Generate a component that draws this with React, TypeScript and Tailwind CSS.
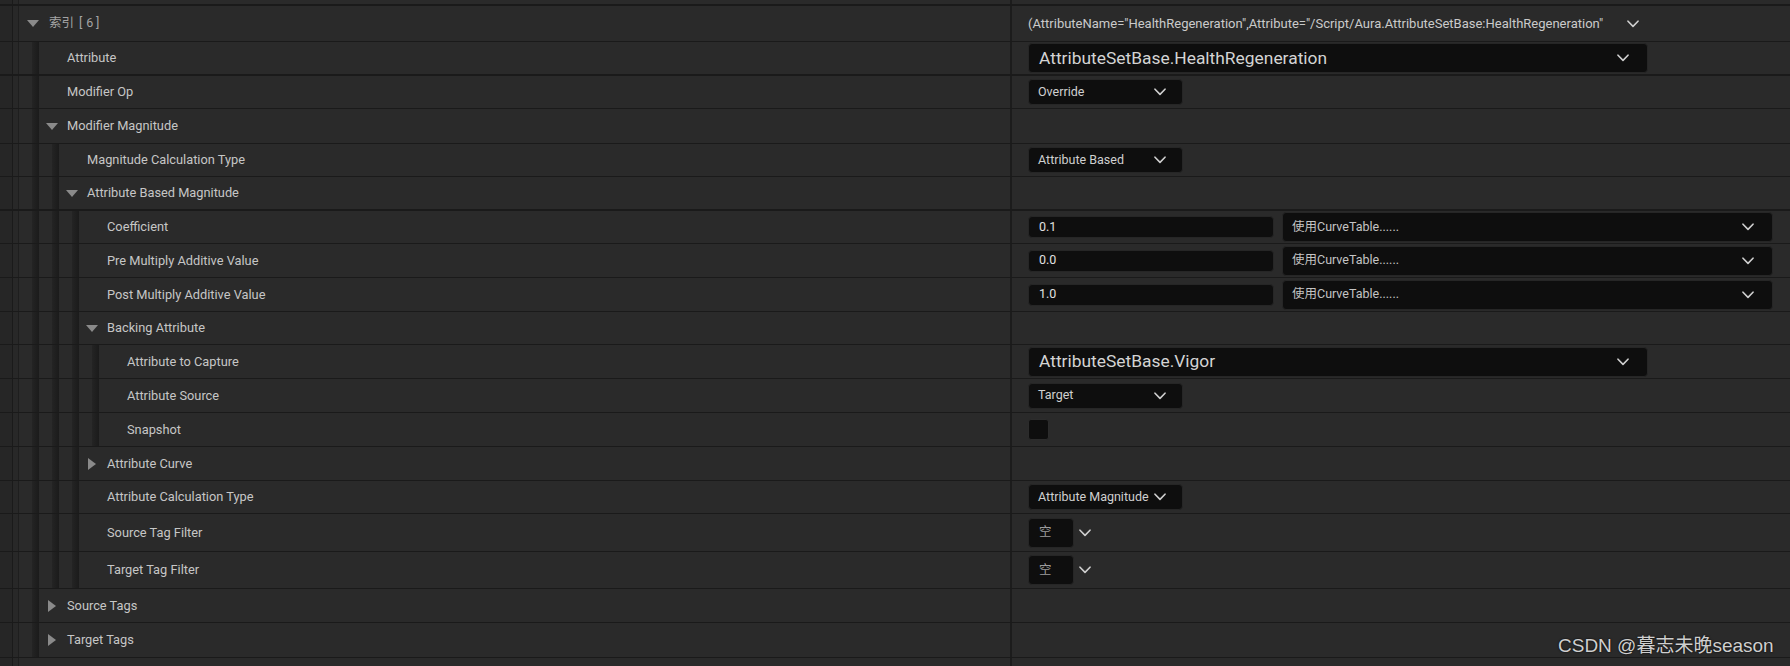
import React from 'react';

const FONT = "font-['Roboto','Noto_Sans_CJK_SC',sans-serif]";

const Chevron = () => (
  <svg width="12" height="8" viewBox="0 0 12 8" className="shrink-0 text-[#cfcfcf]">
    <path d="M1 1.2 L6 6.4 L11 1.2" fill="none" stroke="currentColor" strokeWidth="1.6" strokeLinecap="round" strokeLinejoin="round" />
  </svg>
);

const DownTri = () => (
  <svg width="12" height="7" viewBox="0 0 12 7" className="shrink-0">
    <polygon points="0,0 12,0 6,7" fill="#8a8a8a" />
  </svg>
);

const RightTri = () => (
  <svg width="8" height="12" viewBox="0 0 8 12" className="shrink-0">
    <polygon points="0,0 8,6 0,12" fill="#8a8a8a" />
  </svg>
);

const BigCombo = ({ text }: { text: string }) => (
  <div className="flex h-[30px] w-[620px] items-center justify-between rounded-[4px] border border-[#262626] bg-[#0e0e0e] pl-[10px] pr-[18px]">
    <span className="text-[17.4px] text-[#d4d4d4]">{text}</span>
    <Chevron />
  </div>
);

const SmallCombo = ({ text }: { text: string }) => (
  <div className="flex h-[26px] w-[155px] items-center justify-between rounded-[4px] border border-[#262626] bg-[#0e0e0e] pl-[9px] pr-[16px]">
    <span className="whitespace-nowrap text-[12.5px] text-[#d0d0d0]">{text}</span>
    <Chevron />
  </div>
);

const NumCurve = ({ value }: { value: string }) => (
  <div className="flex items-center gap-[8px]">
    <div className="flex h-[22px] w-[246px] items-center rounded-[4px] border border-[#262626] bg-[#0e0e0e] pl-[10px]">
      <span className="text-[12.5px] text-[#e0e0e0]">{value}</span>
    </div>
    <div className="flex h-[30px] w-[491px] items-center justify-between rounded-[4px] border border-[#262626] bg-[#0e0e0e] pl-[9px] pr-[18px]">
      <span className="text-[12.5px] text-[#c4c4c4]">使用CurveTable......</span>
      <Chevron />
    </div>
  </div>
);

const Checkbox = () => (
  <div className="h-[21px] w-[21px] rounded-[3px] border border-[#2c2c2c] bg-[#0e0e0e]" />
);

const TagFilter = () => (
  <div className="flex items-center gap-[5px]">
    <div className="flex h-[30px] w-[46px] items-center rounded-[4px] border border-[#262626] bg-[#0e0e0e] pl-[10px]">
      <span className="text-[12.5px] text-[#9c9c9c]">空</span>
    </div>
    <Chevron />
  </div>
);

const HeaderValue = () => (
  <div className="flex w-[621px] items-center justify-between pr-[10px]">
    <span className="whitespace-nowrap text-[13px] text-[#cacaca]">
      (AttributeName="HealthRegeneration",Attribute="/Script/Aura.AttributeSetBase:HealthRegeneration"
    </span>
    <Chevron />
  </div>
);

const HeaderLabel = () => (
  <span className="flex items-center whitespace-nowrap pl-[2px] text-[12.5px] text-[#a4a4a4]">
    <span>索引</span>
    <span className="ml-[5px]">[</span>
    <span className="ml-[4px]">6</span>
    <span className="ml-[2.5px]">]</span>
  </span>
);

type Row = {
  label: string;
  depth: number;
  hc: string;
  thick?: boolean;
  arrow?: 'down' | 'right';
  header?: boolean;
  value?: React.ReactNode;
};

const rows: Row[] = [
  { label: '索引 [ 6 ]', depth: 0, hc: 'h-[36px]', arrow: 'down', header: true, value: <HeaderValue /> },
  { label: 'Attribute', depth: 1, hc: 'h-[34px]', thick: true, value: <BigCombo text="AttributeSetBase.HealthRegeneration" /> },
  { label: 'Modifier Op', depth: 1, hc: 'h-[33px]', value: <SmallCombo text="Override" /> },
  { label: 'Modifier Magnitude', depth: 1, hc: 'h-[35px]', arrow: 'down' },
  { label: 'Magnitude Calculation Type', depth: 2, hc: 'h-[33px]', value: <SmallCombo text="Attribute Based" /> },
  { label: 'Attribute Based Magnitude', depth: 2, hc: 'h-[34px]', thick: true, arrow: 'down' },
  { label: 'Coefficient', depth: 3, hc: 'h-[33px]', value: <NumCurve value="0.1" /> },
  { label: 'Pre Multiply Additive Value', depth: 3, hc: 'h-[34px]', value: <NumCurve value="0.0" /> },
  { label: 'Post Multiply Additive Value', depth: 3, hc: 'h-[34px]', value: <NumCurve value="1.0" /> },
  { label: 'Backing Attribute', depth: 3, hc: 'h-[33px]', arrow: 'down' },
  { label: 'Attribute to Capture', depth: 4, hc: 'h-[34px]', value: <BigCombo text="AttributeSetBase.Vigor" /> },
  { label: 'Attribute Source', depth: 4, hc: 'h-[34px]', value: <SmallCombo text="Target" /> },
  { label: 'Snapshot', depth: 4, hc: 'h-[34px]', value: <Checkbox /> },
  { label: 'Attribute Curve', depth: 3, hc: 'h-[34px]', arrow: 'right' },
  { label: 'Attribute Calculation Type', depth: 3, hc: 'h-[33px]', value: <SmallCombo text="Attribute Magnitude" /> },
  { label: 'Source Tag Filter', depth: 3, hc: 'h-[38px]', value: <TagFilter /> },
  { label: 'Target Tag Filter', depth: 3, hc: 'h-[37px]', value: <TagFilter /> },
  { label: 'Source Tags', depth: 1, hc: 'h-[34px]', arrow: 'right' },
  { label: 'Target Tags', depth: 1, hc: 'h-[35px]', arrow: 'right' },
];

const Prefix = () => (
  <div className="flex w-[19px] shrink-0">
    <div className="w-[12px] bg-[#262626]" />
    <div className="w-[1px] bg-[#1a1a1a]" />
    <div className="w-[5px] bg-[#282828]" />
    <div className="w-[1px] bg-[#1e1e1e]" />
  </div>
);

const Indent = () => (
  <div className="flex w-[20px] shrink-0">
    <div className="w-[13px] bg-[#2a2a2a]" />
    <div className="w-[7px] bg-linear-to-r from-[#242424] to-[#1b1b1b]" />
  </div>
);

const RowView = ({ r }: { r: Row }) => {
  const indents = Array.from({ length: r.depth });
  return (
    <div className={`flex ${r.hc} ${r.thick ? 'border-b-2' : 'border-b'} border-[#1a1a1a] bg-[#2a2a2a]`}>
      <div className="flex w-[1010px] shrink-0">
        <Prefix />
        {indents.map((_, i) => (
          <Indent key={i} />
        ))}
        <div className="flex flex-1 items-center">
          <div className={`flex w-[28px] shrink-0 items-center ${r.arrow === 'right' ? 'pl-[9px]' : r.header ? 'pl-[8px]' : 'pl-[7px]'}`}>
            {r.arrow === 'down' && <DownTri />}
            {r.arrow === 'right' && <RightTri />}
          </div>
          {r.header ? (
            <HeaderLabel />
          ) : (
            <span className="whitespace-nowrap text-[12.8px] text-[#c6c6c6]">{r.label}</span>
          )}
        </div>
      </div>
      <div className="w-[2px] shrink-0 bg-[#1c1c1c]" />
      <div className="flex flex-1 items-center pl-[16px]">{r.value}</div>
    </div>
  );
};

export default function App() {
  return (
    <div className={`relative h-[666px] w-[1790px] overflow-hidden bg-[#2a2a2a] ${FONT}`}>
      <div className="flex h-[6px] border-b-2 border-[#1a1a1a] bg-[#2a2a2a]">
        <div className="flex w-[1010px] shrink-0">
          <Prefix />
        </div>
        <div className="w-[2px] shrink-0 bg-[#1c1c1c]" />
      </div>
      {rows.map((r, i) => (
        <RowView key={i} r={r} />
      ))}
      <div className="flex h-[8px] bg-[#2a2a2a]">
        <div className="flex w-[1010px] shrink-0">
          <Prefix />
        </div>
        <div className="w-[2px] shrink-0 bg-[#1c1c1c]" />
      </div>
      <div className="absolute left-[1558px] top-[633px] whitespace-nowrap font-['Liberation_Sans','Noto_Sans_CJK_SC',sans-serif] text-[19px] leading-[26px] text-[#cfcfcf] [text-shadow:0_0_2px_#000]">
        CSDN @暮志未晚season
      </div>
    </div>
  );
}
